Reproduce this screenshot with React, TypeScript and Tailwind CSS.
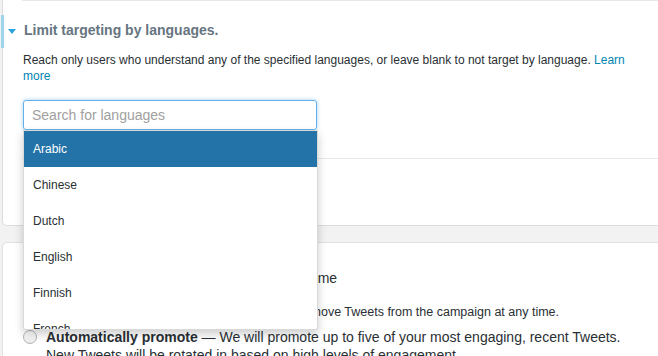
import React from "react";

const langs = ["Arabic", "Chinese", "Dutch", "English", "Finnish", "French", "German"];

export default function App() {
  return (
    <div
      className="relative h-[356px] w-[658px] overflow-hidden bg-[#f2f2f2] text-[#292f33]"
      style={{ fontFamily: '"Liberation Sans", Arial, sans-serif' }}
    >
      {/* Card 1 */}
      <div className="relative ml-[2px] h-[226px] rounded-bl-[5px] border-b border-l border-[#dcdcdc] bg-white">
        <div className="absolute left-[-2px] top-[15px] h-[33px] w-[3px] bg-[#9fd5ec]" />
        <div className="ml-[19px] border-t border-[#e8e8e8]" />
        <div className="relative pl-[20px] pr-[28px] pt-[21px]">
          <div className="absolute left-[5px] top-[28px] h-0 w-0 border-l-[4px] border-r-[4px] border-t-[5px] border-l-transparent border-r-transparent border-t-[#2aa3df]" />
          <div className="pl-[1px] text-[14px] font-bold leading-[17px] text-[#66757f]">Limit targeting by languages.</div>
          <p className="mt-[13px] text-[12px] leading-[16px]">
            Reach only users who understand any of the specified languages, or leave blank to not target by language.{" "}
            <span className="text-[#0084b4]">Learn more</span>
          </p>
          <div className="relative mt-[16px] w-[294px]">
            <div className="flex h-[30px] items-center rounded-[3px] border border-[#66afe9] px-[8px] text-[14px] text-[#a0a0a0] shadow-[0_0_4px_rgba(102,175,233,0.6)]">
              Search for languages
            </div>
            <div className="absolute left-0 top-[30px] z-10 h-[200px] w-[295px] overflow-hidden rounded-b-[3px] border border-[rgba(0,0,0,0.15)] bg-white shadow-[0_4px_10px_rgba(0,0,0,0.2)]">
              {langs.map((l, i) => (
                <div
                  key={l}
                  className={
                    i === 0
                      ? "flex h-[36px] items-center bg-[#2372a8] pl-[9px] text-[12px] text-white"
                      : "flex h-[36px] items-center pl-[9px] text-[12px] text-[#292f33]"
                  }
                >
                  {l}
                </div>
              ))}
            </div>
          </div>
        </div>
        <div className="ml-[19px] mt-[28px] border-t border-[#e8e8e8]" />
      </div>

      {/* Card 2 */}
      <div className="ml-[2px] mt-[16px] h-[200px] rounded-tl-[5px] border-l border-t border-[#e1e1e1] bg-white pl-[20px] pt-[26px] text-[14px] leading-[18px]">
        <div>Choose which Tweets to promote at the same time</div>
        <div className="mt-[16px] flex items-start gap-[9px]">
          <span className="mt-[2px] inline-block h-[14px] w-[14px] shrink-0 rounded-full border border-[#b5b5b5] bg-gradient-to-b from-white to-[#ececec]" />
          <span className="text-[12.5px]">
            <b>Manually select Tweets</b> — You can add and remove Tweets from the campaign at any time.
          </span>
        </div>
        <div className="mt-[7px] flex items-start gap-[9px]">
          <span className="mt-[2px] inline-block h-[14px] w-[14px] shrink-0 rounded-full border border-[#b5b5b5] bg-gradient-to-b from-white to-[#ececec]" />
          <span>
            <b>Automatically promote</b> — We will promote up to five of your most engaging, recent Tweets.
            <br />
            New Tweets will be rotated in based on high levels of engagement.
          </span>
        </div>
      </div>
    </div>
  );
}
